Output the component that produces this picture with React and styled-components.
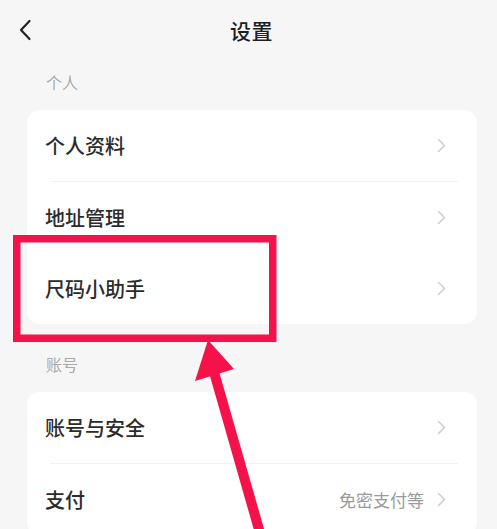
import React from "react";
import styled, { createGlobalStyle } from "styled-components";

const Global = createGlobalStyle`
  html, body { margin: 0; padding: 0; background: #f6f6f6; }
  body { font-family: "Noto Sans CJK SC", "Noto Sans", sans-serif; }
`;

const Page = styled.div`
  position: relative;
  width: 497px;
  height: 529px;
  overflow: hidden;
  background: #f6f6f6;
`;

const Header = styled.header`
  height: 60px;
  display: grid;
  grid-template-columns: 1fr auto 1fr;
  align-items: center;
  padding: 0 12px 0 18px;
`;

const Back = styled.div`
  display: flex;
  align-items: center;
`;

const Title = styled.h1`
  margin: 0;
  font-size: 21px;
  font-weight: 500;
  color: #1e1e1e;
  letter-spacing: 0.5px;
`;

const SectionLabel = styled.div`
  padding: ${(p) => p.$top}px 0 ${(p) => p.$bottom}px 46px;
  line-height: 24px;
  font-size: 16px;
  color: #aaaaaa;
`;

const Card = styled.div`
  margin: 0 20px 0 27px;
  background: #ffffff;
  border-radius: 13px;
  overflow: hidden;
`;

const Row = styled.div`
  height: 71px;
  box-sizing: border-box;
  display: flex;
  align-items: center;
  padding: 0 31px 0 18px;
`;

const Divider = styled.div`
  height: 1px;
  margin: 0 19px 0 23px;
  background: #f3f3f3;
`;

const Label = styled.span`
  flex: 1;
  font-size: 20px;
  font-weight: 500;
  color: #2b2b2b;
`;

const Value = styled.span`
  font-size: 17px;
  color: #9a9a9a;
  margin-right: 13px;
`;

const Overlay = styled.svg`
  position: absolute;
  left: 0;
  top: 0;
  pointer-events: none;
`;

const Chevron = () => (
  <svg width="9" height="15" viewBox="0 0 9 15">
    <path d="M1.5 1.5 L7.5 7.5 L1.5 13.5" fill="none" stroke="#cfcfcf" strokeWidth="1.6" strokeLinecap="round" strokeLinejoin="round" />
  </svg>
);

const Item = ({ label, value }) => (
  <Row>
    <Label>{label}</Label>
    {value && <Value>{value}</Value>}
    <Chevron />
  </Row>
);

export default function App() {
  return (
    <>
      <Global />
      <Page>
        <Header>
          <Back>
            <svg width="14" height="22" viewBox="0 0 14 22">
              <path d="M11.5 2 L3 11 L11.5 20" fill="none" stroke="#222" strokeWidth="2.2" strokeLinecap="round" strokeLinejoin="round" />
            </svg>
          </Back>
          <Title>设置</Title>
          <span />
        </Header>
        <SectionLabel $top={10} $bottom={16}>个人</SectionLabel>
        <Card>
          <Item label="个人资料" />
          <Divider />
          <Item label="地址管理" />
          <Item label="尺码小助手" />
        </Card>
        <SectionLabel $top={28} $bottom={16}>账号</SectionLabel>
        <Card>
          <Item label="账号与安全" />
          <Divider />
          <Item label="支付" value="免密支付等" />
        </Card>
        <Overlay width="497" height="529" viewBox="0 0 497 529">
          <rect x="16.75" y="238.75" width="256" height="99.5" fill="none" stroke="#f5124a" strokeWidth="7.5" />
          <line x1="214" y1="372" x2="262" y2="540" stroke="#f5124a" strokeWidth="10" />
          <polygon points="208,340 195,381 234,369" fill="#f5124a" />
        </Overlay>
      </Page>
    </>
  );
}
